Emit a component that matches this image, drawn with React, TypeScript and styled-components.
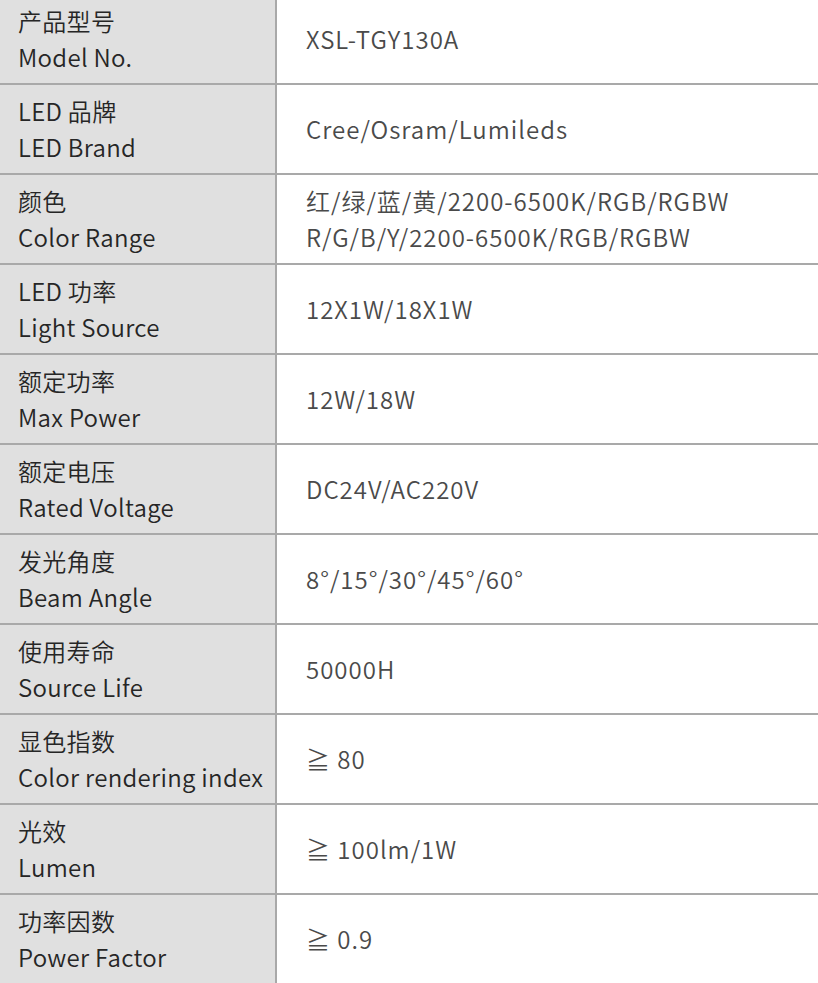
import React from "react";
import styled, { createGlobalStyle } from "styled-components";

const Global = createGlobalStyle`
  html, body { margin: 0; padding: 0; background: #ffffff; overflow: hidden; }
  body { font-family: "Noto Sans CJK SC", "Noto Sans", sans-serif; }
`;

const Table = styled.div`
  width: 818px;
  margin-top: -5px;
  display: flex;
  flex-direction: column;
`;

const Row = styled.div`
  display: grid;
  grid-template-columns: 275px 2px 1fr;
  height: 90px;
  border-bottom: 2px solid #a9a9a9;
  box-sizing: border-box;
`;

const Label = styled.div`
  background: #e0e0e0;
  padding-left: 18px;
  display: flex;
  flex-direction: column;
  justify-content: center;
  font-size: 24px;
  font-weight: 350;
  line-height: 36px;
  letter-spacing: 0.3px;
  color: #262626;
`;

const Divider = styled.div`
  background: #a9a9a9;
`;

const Value = styled.div`
  padding-left: 29px;
  display: flex;
  flex-direction: column;
  justify-content: center;
  font-size: 24px;
  font-weight: 350;
  line-height: 36px;
  color: #4a4a4a;
  letter-spacing: 1px;
`;

const rows: { zh: string; en: string; values: string[] }[] = [
  { zh: "产品型号", en: "Model No.", values: ["XSL-TGY130A"] },
  { zh: "LED 品牌", en: "LED Brand", values: ["Cree/Osram/Lumileds"] },
  {
    zh: "颜色",
    en: "Color Range",
    values: ["红/绿/蓝/黄/2200-6500K/RGB/RGBW", "R/G/B/Y/2200-6500K/RGB/RGBW"],
  },
  { zh: "LED 功率", en: "Light Source", values: ["12X1W/18X1W"] },
  { zh: "额定功率", en: "Max Power", values: ["12W/18W"] },
  { zh: "额定电压", en: "Rated Voltage", values: ["DC24V/AC220V"] },
  { zh: "发光角度", en: "Beam Angle", values: ["8°/15°/30°/45°/60°"] },
  { zh: "使用寿命", en: "Source Life", values: ["50000H"] },
  { zh: "显色指数", en: "Color rendering index", values: ["≧ 80"] },
  { zh: "光效", en: "Lumen", values: ["≧ 100lm/1W"] },
  { zh: "功率因数", en: "Power Factor", values: ["≧ 0.9"] },
];

export default function App() {
  return (
    <>
      <Global />
      <Table>
        {rows.map((r) => (
          <Row key={r.en}>
            <Label>
              <span>{r.zh}</span>
              <span>{r.en}</span>
            </Label>
            <Divider />
            <Value>
              {r.values.map((v) => (
                <span key={v}>{v}</span>
              ))}
            </Value>
          </Row>
        ))}
      </Table>
    </>
  );
}
